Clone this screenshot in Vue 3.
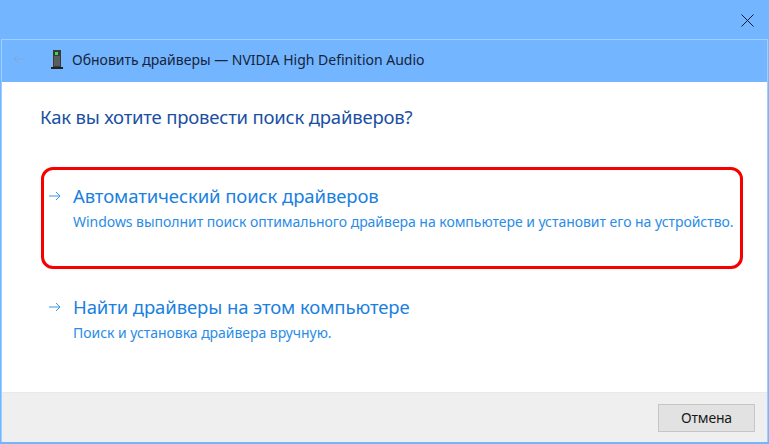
<script setup>
const options = [
  {
    title: 'Автоматический поиск драйверов',
    desc: 'Windows выполнит поиск оптимального драйвера на компьютере и установит его на устройство.',
    marked: true,
  },
  {
    title: 'Найти драйверы на этом компьютере',
    desc: 'Поиск и установка драйвера вручную.',
    marked: false,
  },
];
</script>

<template>
  <div class="window">
    <div class="titlebar">
      <svg class="close" width="13" height="13" viewBox="0 0 13 13">
        <path d="M0.5 0.5L12.5 12.5M12.5 0.5L0.5 12.5" stroke="#0b1a2b" stroke-width="1" fill="none" />
      </svg>
    </div>
    <div class="frame">
      <div class="header">
        <svg class="back" width="12" height="10" viewBox="0 0 12 10">
          <path d="M12 5H1M5 1L1 5L5 9" stroke="#86a6d2" stroke-width="1" fill="none" />
        </svg>
        <svg class="device" width="12" height="19" viewBox="0 0 12 19">
          <rect x="2" y="0" width="8" height="17" fill="#3a3a3a" />
          <rect x="3" y="6" width="6" height="10" fill="#5c5c5c" />
          <rect x="4" y="2" width="3" height="3" fill="#35e03c" />
          <rect x="0" y="17" width="12" height="2" fill="#222" />
        </svg>
        <span class="header-title">Обновить драйверы — NVIDIA High Definition Audio</span>
      </div>
      <div class="content">
        <h1 class="question">Как вы хотите провести поиск драйверов?</h1>
        <div class="options">
          <div v-for="opt in options" :key="opt.title" class="option" :class="{ marked: opt.marked }">
            <svg class="arrow" width="12" height="10" viewBox="0 0 12 10">
              <path d="M0 5H11M7 1L11 5L7 9" stroke="#3b95e6" stroke-width="1" fill="none" />
            </svg>
            <div class="option-text">
              <div class="option-title">{{ opt.title }}</div>
              <div class="option-desc">{{ opt.desc }}</div>
            </div>
          </div>
        </div>
      </div>
      <div class="footer">
        <button class="cancel">Отмена</button>
      </div>
    </div>
  </div>
</template>

<style>
html, body { margin: 0; background: #73b5ff; }
</style>

<style scoped>
.window {
  width: 769px;
  height: 444px;
  background: #73b5ff;
  display: flex;
  flex-direction: column;
  overflow: hidden;
  font-family: "Noto Sans", "Open Sans", sans-serif;
}
.titlebar {
  height: 39px;
  flex: none;
  display: flex;
  justify-content: flex-end;
  align-items: flex-start;
  padding: 14px 15px 0 0;
  box-sizing: border-box;
}
.frame {
  flex: 1;
  display: flex;
  flex-direction: column;
  margin: 0 1px 2px 1px;
  border-top: 1px solid #9fcfff;
  border-left: 1px solid #9fcfff;
  border-right: 1px solid #9fcfff;
  min-height: 0;
}
.header {
  height: 42px;
  flex: none;
  display: flex;
  align-items: center;
  color: #16243a;
  font-size: 14px;
  box-sizing: border-box;
  padding-bottom: 4px;
}
.back { margin-left: 11px; }
.device { margin-left: 26px; }
.header-title { margin-left: 9px; }
.content {
  flex: 1;
  background: #fff;
  min-height: 0;
}
.question {
  margin: 24px 0 0 38px;
  font-size: 18.5px;
  line-height: 22px;
  font-weight: 400;
  color: #1a4fa3;
  letter-spacing: -0.2px;
}
.options {
  display: flex;
  flex-direction: column;
  margin: 39px 0 0 39px;
  width: 702px;
}
.option {
  display: flex;
  align-items: flex-start;
  box-sizing: border-box;
  padding: 0 0 0 5px;
  margin-bottom: 9px;
  border: 3px solid transparent;
  border-radius: 12px;
  height: 102px;
}
.option + .option {
  height: auto;
  margin-bottom: 0;
}
.option.marked {
  border-color: #f70000;
}
.arrow {
  flex: none;
  margin-top: 21px;
}
.option-text { margin-left: 12px; }
.option-title {
  font-size: 18.5px;
  line-height: 24px;
  margin-top: 14px;
  color: #1a80e0;
  letter-spacing: -0.1px;
}
.option-desc {
  font-size: 14px;
  line-height: 18px;
  margin-top: 5px;
  color: #2a8ce6;
  letter-spacing: -0.04px;
  white-space: nowrap;
}
.footer {
  height: 50px;
  flex: none;
  background: #efefef;
  border-top: 1px solid #e9e9e9;
  box-sizing: border-box;
  display: flex;
  justify-content: flex-end;
  align-items: center;
  padding-right: 12px;
}
.cancel {
  width: 97px;
  height: 28px;
  background: #e2e2e2;
  border: 1px solid #c6c6c6;
  font-family: inherit;
  font-size: 14px;
  color: #1a1a1a;
  padding: 0;
  letter-spacing: -0.2px;
}
</style>
